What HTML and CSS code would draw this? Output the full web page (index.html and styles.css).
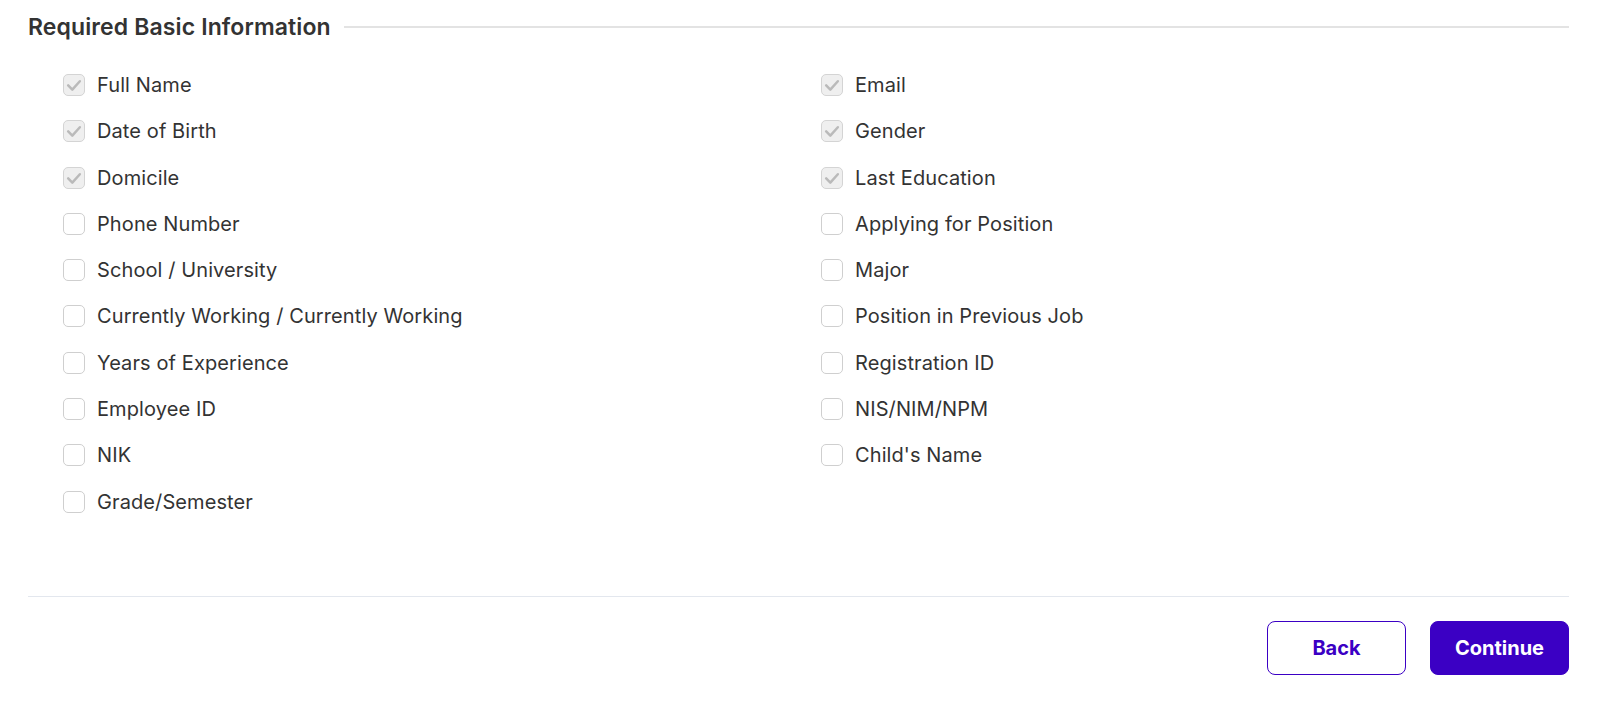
FILE: index.html
```html
<!DOCTYPE html>
<html lang="en">
<head>
    <meta charset="UTF-8">
    <meta name="viewport" content="width=device-width, initial-scale=1.0">
    <title>Required Basic Information</title>
    <link rel="stylesheet" href="styles.css">
</head>
<body>

<div class="form-step">
    <div class="section-title">
        <h2>Required Basic Information</h2>
        <div class="title-line"></div>
    </div>

    <div class="field-grid">
        <label class="field"><span class="box checked"><svg viewBox="0 0 24 24"><path d="M5 12.5l5 5 9-10"/></svg></span>Full Name</label>
        <label class="field"><span class="box checked"><svg viewBox="0 0 24 24"><path d="M5 12.5l5 5 9-10"/></svg></span>Email</label>
        <label class="field"><span class="box checked"><svg viewBox="0 0 24 24"><path d="M5 12.5l5 5 9-10"/></svg></span>Date of Birth</label>
        <label class="field"><span class="box checked"><svg viewBox="0 0 24 24"><path d="M5 12.5l5 5 9-10"/></svg></span>Gender</label>
        <label class="field"><span class="box checked"><svg viewBox="0 0 24 24"><path d="M5 12.5l5 5 9-10"/></svg></span>Domicile</label>
        <label class="field"><span class="box checked"><svg viewBox="0 0 24 24"><path d="M5 12.5l5 5 9-10"/></svg></span>Last Education</label>
        <label class="field"><span class="box"></span>Phone Number</label>
        <label class="field"><span class="box"></span>Applying for Position</label>
        <label class="field"><span class="box"></span>School / University</label>
        <label class="field"><span class="box"></span>Major</label>
        <label class="field"><span class="box"></span>Currently Working / Currently Working</label>
        <label class="field"><span class="box"></span>Position in Previous Job</label>
        <label class="field"><span class="box"></span>Years of Experience</label>
        <label class="field"><span class="box"></span>Registration ID</label>
        <label class="field"><span class="box"></span>Employee ID</label>
        <label class="field"><span class="box"></span>NIS/NIM/NPM</label>
        <label class="field"><span class="box"></span>NIK</label>
        <label class="field"><span class="box"></span>Child's Name</label>
        <label class="field"><span class="box"></span>Grade/Semester</label>
    </div>

    <div class="footer">
        <button class="btn btn-outline">Back</button>
        <button class="btn btn-primary">Continue</button>
    </div>
</div>

</body>
</html>
```

FILE: styles.css
```css
body {
    margin: 0;
    background-color: #ffffff;
    font-family: Inter, "Noto Sans", sans-serif;
    color: #333333;
}
.form-step {
    padding: 13px 31px 0 28px;
}
.section-title {
    display: flex;
    align-items: center;
    gap: 13px;
    height: 28px;
}
.section-title h2 {
    margin: 0;
    font-size: 23px;
    font-weight: 600;
    line-height: 28px;
    letter-spacing: 0.12px;
    color: #333333;
}
.title-line {
    flex: 1;
    height: 2px;
    background-color: #e3e3e3;
}
.field-grid {
    display: grid;
    grid-template-columns: 758px 1fr;
    row-gap: 24.3px;
    margin-top: 33px;
    padding-left: 35px;
}
.field {
    display: flex;
    align-items: center;
    gap: 12px;
    height: 22px;
    font-size: 20px;
    letter-spacing: 0.1px;
    color: #333333;
}
.box {
    box-sizing: border-box;
    flex-shrink: 0;
    width: 22px;
    height: 22px;
    border: 1.5px solid #cfcfcf;
    border-radius: 5px;
    background-color: #ffffff;
    display: flex;
    align-items: center;
    justify-content: center;
}
.box.checked {
    background-color: #efefef;
    border-color: #d4d4d4;
}
.box svg {
    width: 20px;
    height: 20px;
    fill: none;
    stroke: #bababa;
    stroke-width: 3;
    stroke-linecap: round;
    stroke-linejoin: round;
}
.footer {
    display: flex;
    justify-content: flex-end;
    gap: 24px;
    margin-top: 83px;
    padding-top: 24px;
    border-top: 1.5px solid #e3e7ee;
}
.btn {
    box-sizing: border-box;
    width: 139px;
    height: 54px;
    border-radius: 8px;
    font-family: Inter, "Noto Sans", sans-serif;
    font-size: 20px;
    font-weight: 700;
    cursor: pointer;
}
.btn-outline {
    background-color: #ffffff;
    border: 1.5px solid #3b00c4;
    color: #3b00c4;
}
.btn-primary {
    background-color: #3b00c4;
    border: 1.5px solid #3b00c4;
    color: #ffffff;
}
```
